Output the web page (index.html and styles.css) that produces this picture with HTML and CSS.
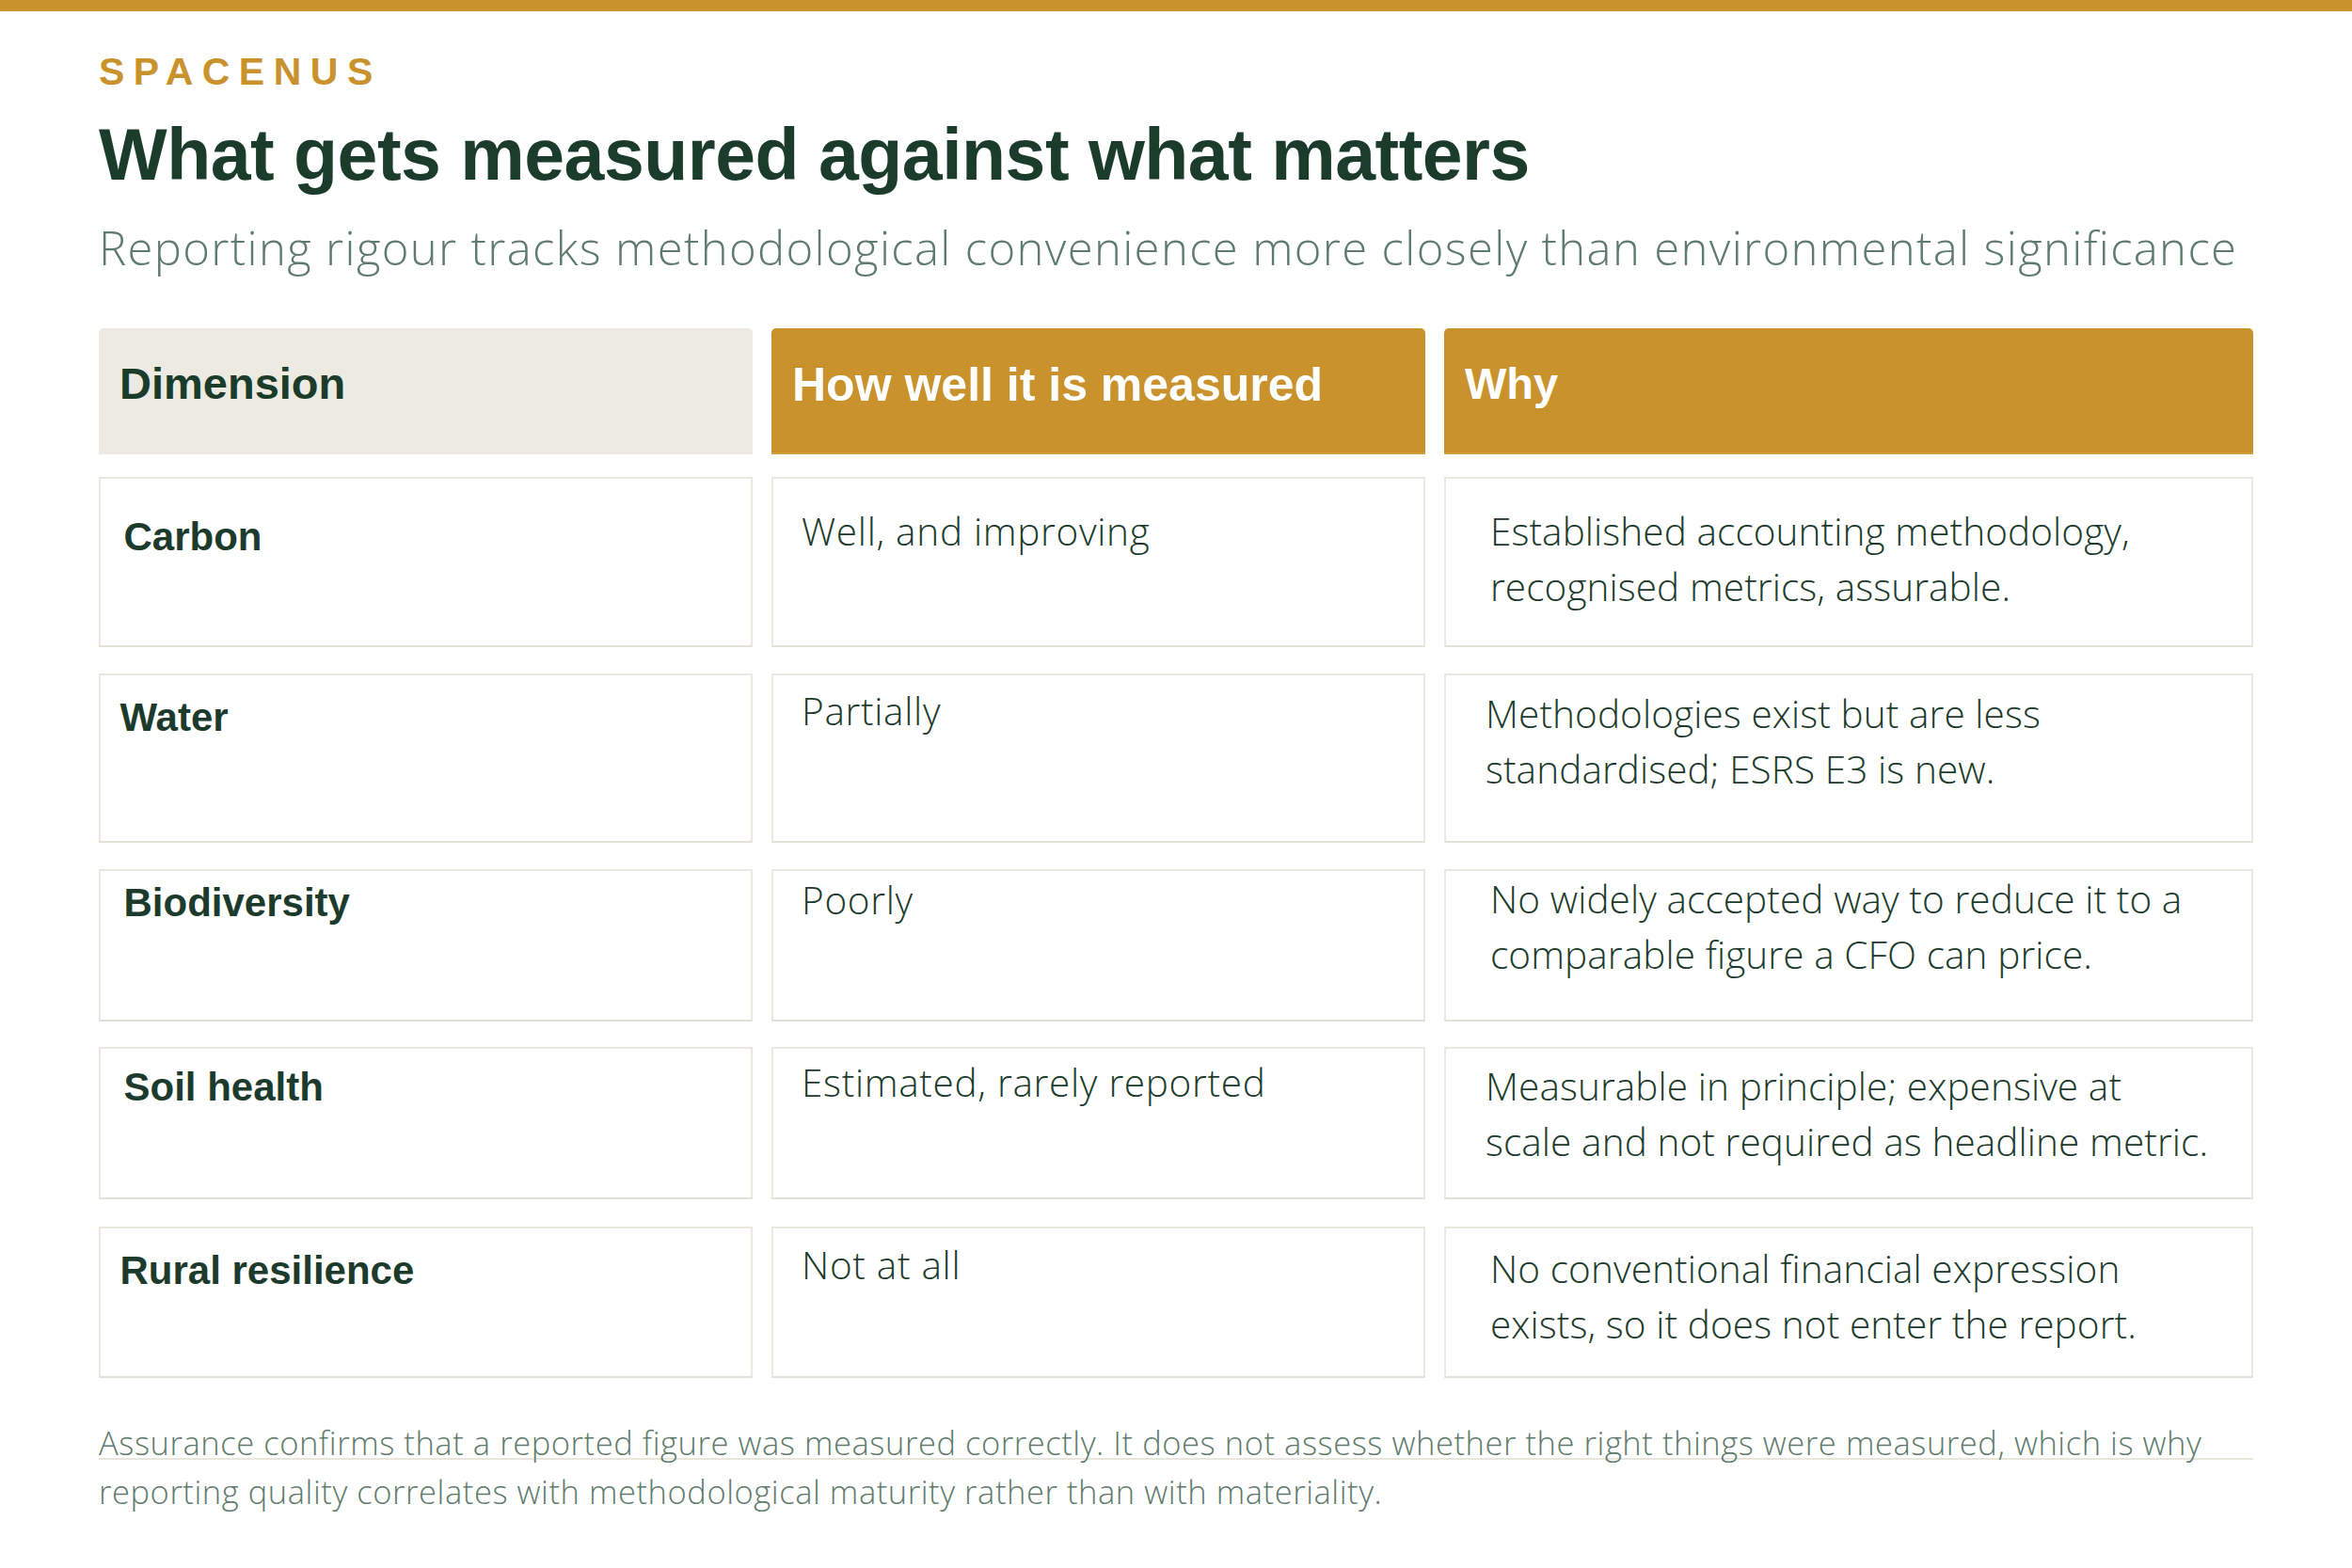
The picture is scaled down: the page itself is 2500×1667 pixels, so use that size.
FILE: index.html
```html
<!DOCTYPE html>
<html lang="en">
<head>
<meta charset="utf-8">
<title>What gets measured against what matters</title>
<link rel="stylesheet" href="styles.css">
</head>
<body>
<div class="topbar"></div>
<main class="page">
  <div class="brand">SPACENUS</div>
  <h1 class="title">What gets measured against what matters</h1>
  <p class="subtitle">Reporting rigour tracks methodological convenience more closely than environmental significance</p>

  <section class="table">
    <div class="row row-head">
      <div class="hcell hcell-dim">Dimension</div>
      <div class="hcell hcell-gold hcell-big">How well it is measured</div>
      <div class="hcell hcell-gold">Why</div>
    </div>

    <div class="row row-1">
      <div class="cell cell-dim">Carbon</div>
      <div class="cell cell-how">Well, and improving</div>
      <div class="cell cell-why">Established accounting methodology,<br>recognised metrics, assurable.</div>
    </div>

    <div class="row row-2">
      <div class="cell cell-dim cell-dim-in">Water</div>
      <div class="cell cell-how">Partially</div>
      <div class="cell cell-why cell-why-in">Methodologies exist but are less<br>standardised; ESRS E3 is new.</div>
    </div>

    <div class="row row-3">
      <div class="cell cell-dim">Biodiversity</div>
      <div class="cell cell-how">Poorly</div>
      <div class="cell cell-why">No widely accepted way to reduce it to a<br>comparable figure a CFO can price.</div>
    </div>

    <div class="row row-4">
      <div class="cell cell-dim">Soil health</div>
      <div class="cell cell-how">Estimated, rarely reported</div>
      <div class="cell cell-why cell-why-in">Measurable in principle; expensive at<br>scale and not required as headline metric.</div>
    </div>

    <div class="row row-5">
      <div class="cell cell-dim cell-dim-in">Rural resilience</div>
      <div class="cell cell-how">Not at all</div>
      <div class="cell cell-why">No conventional financial expression<br>exists, so it does not enter the report.</div>
    </div>
  </section>

  <footer class="note">
    <div class="note-rule"></div>
    <p class="note-text">Assurance confirms that a reported figure was measured correctly. It does not assess whether the right things were measured, which is why<br>reporting quality correlates with methodological maturity rather than with materiality.</p>
  </footer>
</main>
</body>
</html>
```

FILE: styles.css
```css
html, body {
  margin: 0;
  padding: 0;
  background: #ffffff;
}

body {
  font-family: "Open Sans", "Liberation Sans", sans-serif;
  color: #1c3b2c;
}

.topbar {
  height: 12px;
  background: #c9922c;
}

.page {
  padding: 0 105px;
  width: 2290px;
}

.brand {
  margin-top: 44px;
  font-family: "Liberation Sans", Arial, sans-serif;
  font-weight: 700;
  font-size: 41px;
  line-height: 1;
  letter-spacing: 9.5px;
  color: #c9922c;
}

.title {
  margin: 29px 0 0;
  font-family: "Liberation Sans", Arial, sans-serif;
  font-weight: 700;
  font-size: 77px;
  line-height: 1;
  letter-spacing: -0.5px;
  color: #1b3c2b;
}

.subtitle {
  margin: 36px 0 0;
  font-family: "Open Sans", sans-serif;
  font-weight: 350;
  font-size: 49px;
  line-height: 1;
  letter-spacing: 1.35px;
  color: #5f7b6d;
  white-space: nowrap;
}

.table {
  margin-top: 61px;
  display: flex;
  flex-direction: column;
}

.row {
  display: grid;
  grid-template-columns: 695px 695px 860px;
  column-gap: 20px;
}

.row-head { height: 134px; }
.row-1 { margin-top: 24px; height: 181px; }
.row-2 { margin-top: 28px; height: 180px; }
.row-3 { margin-top: 28px; height: 162px; }
.row-4 { margin-top: 27px; height: 162px; }
.row-5 { margin-top: 29px; height: 161px; }

.hcell {
  box-sizing: border-box;
  border-radius: 5px 5px 0 0;
  padding: 35px 22px 0;
  font-family: "Liberation Sans", Arial, sans-serif;
  font-weight: 700;
  font-size: 47px;
  line-height: 1;
}

.hcell-dim {
  background: #edeae2;
  color: #1b3c2b;
}

.hcell-gold {
  background: #c9922c;
  border-bottom: 2px solid #d29c38;
  color: #ffffff;
}

.hcell-big {
  font-size: 50px;
}

.cell {
  box-sizing: border-box;
  border: 2px solid #ebe8e0;
  border-bottom-color: #e4e1d8;
  background: #ffffff;
  color: #1c3b2c;
}

.cell-dim {
  padding-left: 24.5px;
  font-family: "Liberation Sans", Arial, sans-serif;
  font-weight: 700;
  font-size: 42px;
  line-height: 1;
}

.cell-dim-in { padding-left: 20.5px; }

.cell-how,
.cell-why {
  font-family: "Open Sans", sans-serif;
  font-weight: 350;
  font-size: 40.5px;
  line-height: 58.6px;
}

.cell-how { padding-left: 30px; letter-spacing: 0.7px; }
.cell-why { padding-left: 47px; letter-spacing: 0.1px; }
.cell-why-in { padding-left: 42px; }

.row-1 .cell-dim { padding-top: 41px; }
.row-1 .cell-how { padding-top: 27px; }
.row-1 .cell-why { padding-top: 27px; }

.row-2 .cell-dim { padding-top: 24px; }
.row-2 .cell-how { padding-top: 9px; }
.row-2 .cell-why { padding-top: 12px; }

.row-3 .cell-dim { padding-top: 13px; }
.row-3 .cell-how { padding-top: 2px; }
.row-3 .cell-why { padding-top: 1px; }

.row-4 .cell-dim { padding-top: 20px; }
.row-4 .cell-how { padding-top: 7px; }
.row-4 .cell-why { padding-top: 11px; }

.row-5 .cell-dim { padding-top: 24px; }
.row-5 .cell-how { padding-top: 10px; }
.row-5 .cell-why { padding-top: 14px; }

.note {
  margin-top: 85px;
}

.note-rule {
  height: 2px;
  background: #e8e5dd;
}

.note-text {
  margin: -44px 0 0;
  font-family: "Open Sans", sans-serif;
  font-weight: 350;
  font-size: 34.5px;
  line-height: 52px;
  letter-spacing: 0.56px;
  color: #5f7b6d;
  white-space: nowrap;
}
```
